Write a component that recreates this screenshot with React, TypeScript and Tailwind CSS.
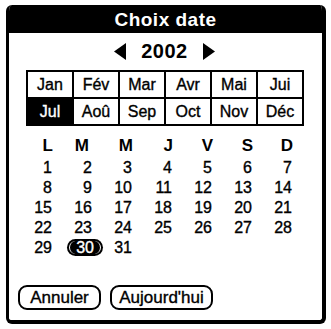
import React from 'react';

const months = ['Jan', 'Fév', 'Mar', 'Avr', 'Mai', 'Jui', 'Jul', 'Aoû', 'Sep', 'Oct', 'Nov', 'Déc'];
const dayHeads = ['L', 'M', 'M', 'J', 'V', 'S', 'D'];
const days = Array.from({ length: 31 }, (_, i) => i + 1);

const font = { fontFamily: '"Liberation Sans", Arial, sans-serif' };

const Triangle: React.FC<{ dir: 'left' | 'right' }> = ({ dir }) => (
  <svg width="12" height="17" viewBox="0 0 12 17">
    {dir === 'left' ? <polygon points="12,0 12,17 0,8.5" fill="black" /> : <polygon points="0,0 0,17 12,8.5" fill="black" />}
  </svg>
);

export default function App() {
  return (
    <div className="w-[331px] h-[329px] bg-white pt-[5px] pl-[6px]" style={font}>
      <div className="w-[320px] h-[319px] border-l-[3px] border-r-[4px] border-b-[4px] border-black rounded-[6px] overflow-hidden flex flex-col">
        {/* Title */}
        <div className="h-[28px] bg-black flex items-center justify-center">
          <span className="text-white font-bold text-[19px] leading-none tracking-[0.5px]">Choix date</span>
        </div>

        {/* Year */}
        <div className="mt-[8px] h-[20px] flex items-center justify-center gap-[15px] pr-[2px]">
          <Triangle dir="left" />
          <span className="font-bold text-[20px] leading-none tracking-[0.5px]">2002</span>
          <Triangle dir="right" />
        </div>

        {/* Months */}
        <div className="mt-[9px] ml-[17px] w-[278px] grid grid-cols-6 gap-[2px] bg-black p-[2px]">
          {months.map((m) => (
            <div
              key={m}
              className={`h-[25px] flex items-center justify-center text-[16px] leading-none [-webkit-text-stroke:0.35px] ${
                m === 'Jul' ? 'bg-black text-white' : 'bg-white text-black'
              }`}
            >
              {m}
            </div>
          ))}
        </div>

        {/* Day headers */}
        <div className="mt-[10px] ml-[4px] w-[280px] grid grid-cols-7">
          {dayHeads.map((d, i) => (
            <div key={i} className={`h-[20px] leading-[20px] text-right font-bold text-[17px] ${i === 1 ? 'pr-[4px]' : ''}`}>
              {d}
            </div>
          ))}
        </div>

        {/* Days */}
        <div className="mt-[2px] ml-[4px] w-[280px] grid grid-cols-7">
          {days.map((d) => (
            <div key={d} className="h-[20px] leading-[20px] text-right pr-[1px] text-[16px] [-webkit-text-stroke:0.35px]">
              {d === 30 ? (
                <span className="inline-flex items-center h-[17px] -mr-[11px] rounded-full bg-black p-[2px] align-middle relative -top-[1px]">
                  <span className="h-[13px] flex items-center rounded-full border-x border-white px-[6px] text-white leading-none">
                    30
                  </span>
                </span>
              ) : (
                d
              )}
            </div>
          ))}
        </div>

        {/* Buttons */}
        <div className="mt-[27px] ml-[9px] flex gap-[9px]">
          <button className="w-[83px] h-[25px] border-2 border-black rounded-[9px] text-[17px] leading-none flex items-center justify-center [-webkit-text-stroke:0.35px]">
            Annuler
          </button>
          <button className="w-[103px] h-[25px] border-2 border-black rounded-[9px] text-[17px] leading-none flex items-center justify-center [-webkit-text-stroke:0.35px]">
            Aujourd'hui
          </button>
        </div>
      </div>
    </div>
  );
}
